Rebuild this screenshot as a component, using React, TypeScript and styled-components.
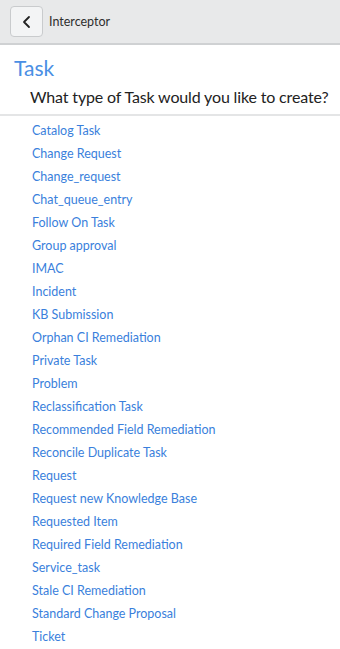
import styled, { createGlobalStyle } from "styled-components";

const GlobalStyle = createGlobalStyle`
    html, body {
        margin: 0;
        padding: 0;
        background: #fff;
        font-family: Lato, "Liberation Sans", sans-serif;
    }
`;

const Page = styled.div`
    width: 340px;
    min-height: 649px;
    background: #fff;
`;

const Header = styled.header`
    height: 43px;
    background-color: #e8e9ea;
    border-bottom: 2px solid #cfd1d3;
    display: flex;
    align-items: center;
    gap: 6px;
    padding: 0 10px;
`;

const BackButton = styled.button`
    width: 33px;
    height: 31px;
    padding: 0;
    border: 1px solid #c9cbcd;
    border-radius: 4px;
    background: #f3f4f5;
    display: flex;
    align-items: center;
    justify-content: center;
    cursor: pointer;
`;

const HeaderTitle = styled.span`
    font-size: 12.5px;
    color: #2e2e2e;
`;

const Intro = styled.div`
    padding: 10px 14px 0;
    border-bottom: 2px solid #e4e5e6;
`;

const Title = styled.h1`
    margin: 0;
    font-size: 21px;
    font-weight: 400;
    line-height: 26px;
    color: #4a8fe4;
`;

const Subtitle = styled.h2`
    margin: 0;
    padding: 5px 0 6px 16px;
    font-size: 16px;
    font-weight: 400;
    line-height: 22px;
    letter-spacing: -0.15px;
    white-space: nowrap;
    color: #222;
`;

const List = styled.ul`
    list-style: none;
    margin: 0;
    padding: 3px 0 0 32px;
`;

const Item = styled.li`
    height: 23px;
    display: flex;
    align-items: center;
    a {
        font-size: 12.5px;
        color: #3a7fdc;
        text-decoration: none;
    }
`;

const types = [
    "Catalog Task",
    "Change Request",
    "Change_request",
    "Chat_queue_entry",
    "Follow On Task",
    "Group approval",
    "IMAC",
    "Incident",
    "KB Submission",
    "Orphan CI Remediation",
    "Private Task",
    "Problem",
    "Reclassification Task",
    "Recommended Field Remediation",
    "Reconcile Duplicate Task",
    "Request",
    "Request new Knowledge Base",
    "Requested Item",
    "Required Field Remediation",
    "Service_task",
    "Stale CI Remediation",
    "Standard Change Proposal",
    "Ticket",
];

const App = () => {
    return (
        <Page>
            <GlobalStyle />
            <Header>
                <BackButton aria-label='Back'>
                    <svg width='14' height='14' viewBox='0 0 14 14' fill='none'>
                        <path d='M9 2 L4 7 L9 12' stroke='#222' strokeWidth='1.8' strokeLinecap='round' strokeLinejoin='round' />
                    </svg>
                </BackButton>
                <HeaderTitle>Interceptor</HeaderTitle>
            </Header>
            <Intro>
                <Title>Task</Title>
                <Subtitle>What type of Task would you like to create?</Subtitle>
            </Intro>
            <List>
                {types.map((t) => (
                    <Item key={t}>
                        <a href='#'>{t}</a>
                    </Item>
                ))}
            </List>
        </Page>
    );
};

export default App;
